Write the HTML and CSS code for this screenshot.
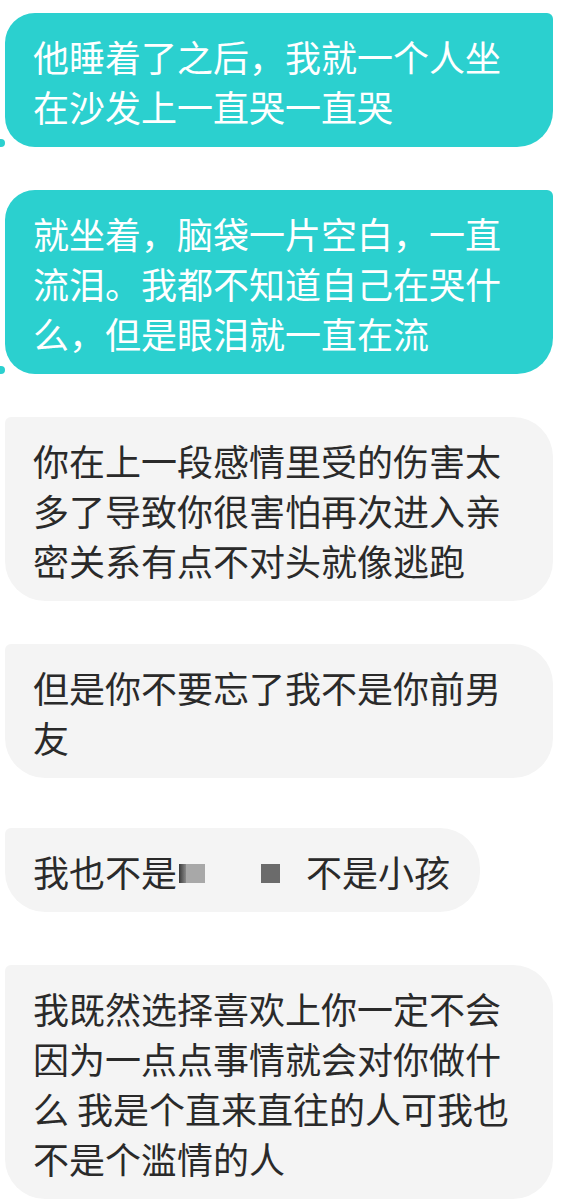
FILE: index.html
```html
<!DOCTYPE html>
<html lang="zh-CN">
<head>
  <meta charset="UTF-8" />
  <title>聊天记录</title>
  <link rel="stylesheet" href="styles.css">
</head>
<body>
  <div class="chat">
    <div class="msg msg-out">他睡着了之后，我就一个人坐在沙发上一直哭一直哭</div>
    <div class="msg msg-out">就坐着，脑袋一片空白，一直流泪。我都不知道自己在哭什么，但是眼泪就一直在流</div>
    <div class="msg msg-in">你在上一段感情里受的伤害太多了导致你很害怕再次进入亲密关系有点不对头就像逃跑</div>
    <div class="msg msg-in">但是你不要忘了我不是你前男友</div>
    <div class="msg msg-in gap-md">我也不是<span class="censor"><span class="px px-edge"></span><span class="px px-light"></span><span class="px px-dark"></span></span>不是小孩</div>
    <div class="msg msg-in gap-lg">我既然选择喜欢上你一定不会因为一点点事情就会对你做什么 我是个直来直往的人可我也不是个滥情的人</div>
  </div>
</body>
</html>
```

FILE: styles.css
```css
  html, body {
    margin: 0;
    padding: 0;
    background: #fff;
  }

  body {
    font-family: "Noto Sans CJK SC", "Noto Sans", sans-serif;
  }

  .chat {
    display: flex;
    flex-direction: column;
    align-items: flex-start;
    gap: 43px;
    padding: 13px 0 0 5px;
  }

  .msg {
    position: relative;
    box-sizing: border-box;
    max-width: 548px;
    padding: 18px 30px 16px 28px;
    font-size: 36px;
    line-height: 50px;
  }

  .msg-out {
    background-color: #2bd0cf;
    color: #fff;
    border-radius: 30px 6px 36px 30px;
  }

  .msg-out::before {
    content: "";
    position: absolute;
    left: -8px;
    bottom: 0;
    width: 8px;
    height: 8px;
    border-radius: 50%;
    background-color: #2bd0cf;
  }

  .msg-in {
    background-color: #f4f4f4;
    color: #2a2a2a;
    border-radius: 6px 40px 40px 40px;
  }

  .gap-md {
    margin-top: 7px;
  }

  .gap-lg {
    margin-top: 10px;
  }

  .censor {
    display: inline-flex;
    width: 129px;
    height: 19px;
    vertical-align: 4px;
    padding-left: 2px;
    box-sizing: border-box;
  }

  .px {
    display: block;
    height: 19px;
  }

  .px-edge {
    width: 7px;
    background: linear-gradient(to right, #3a3a3a, #8a8a8a);
  }

  .px-light {
    width: 19px;
    background-color: #a8a8a8;
  }

  .px-dark {
    width: 19px;
    margin-left: 56px;
    background-color: #6b6b6b;
  }
```
